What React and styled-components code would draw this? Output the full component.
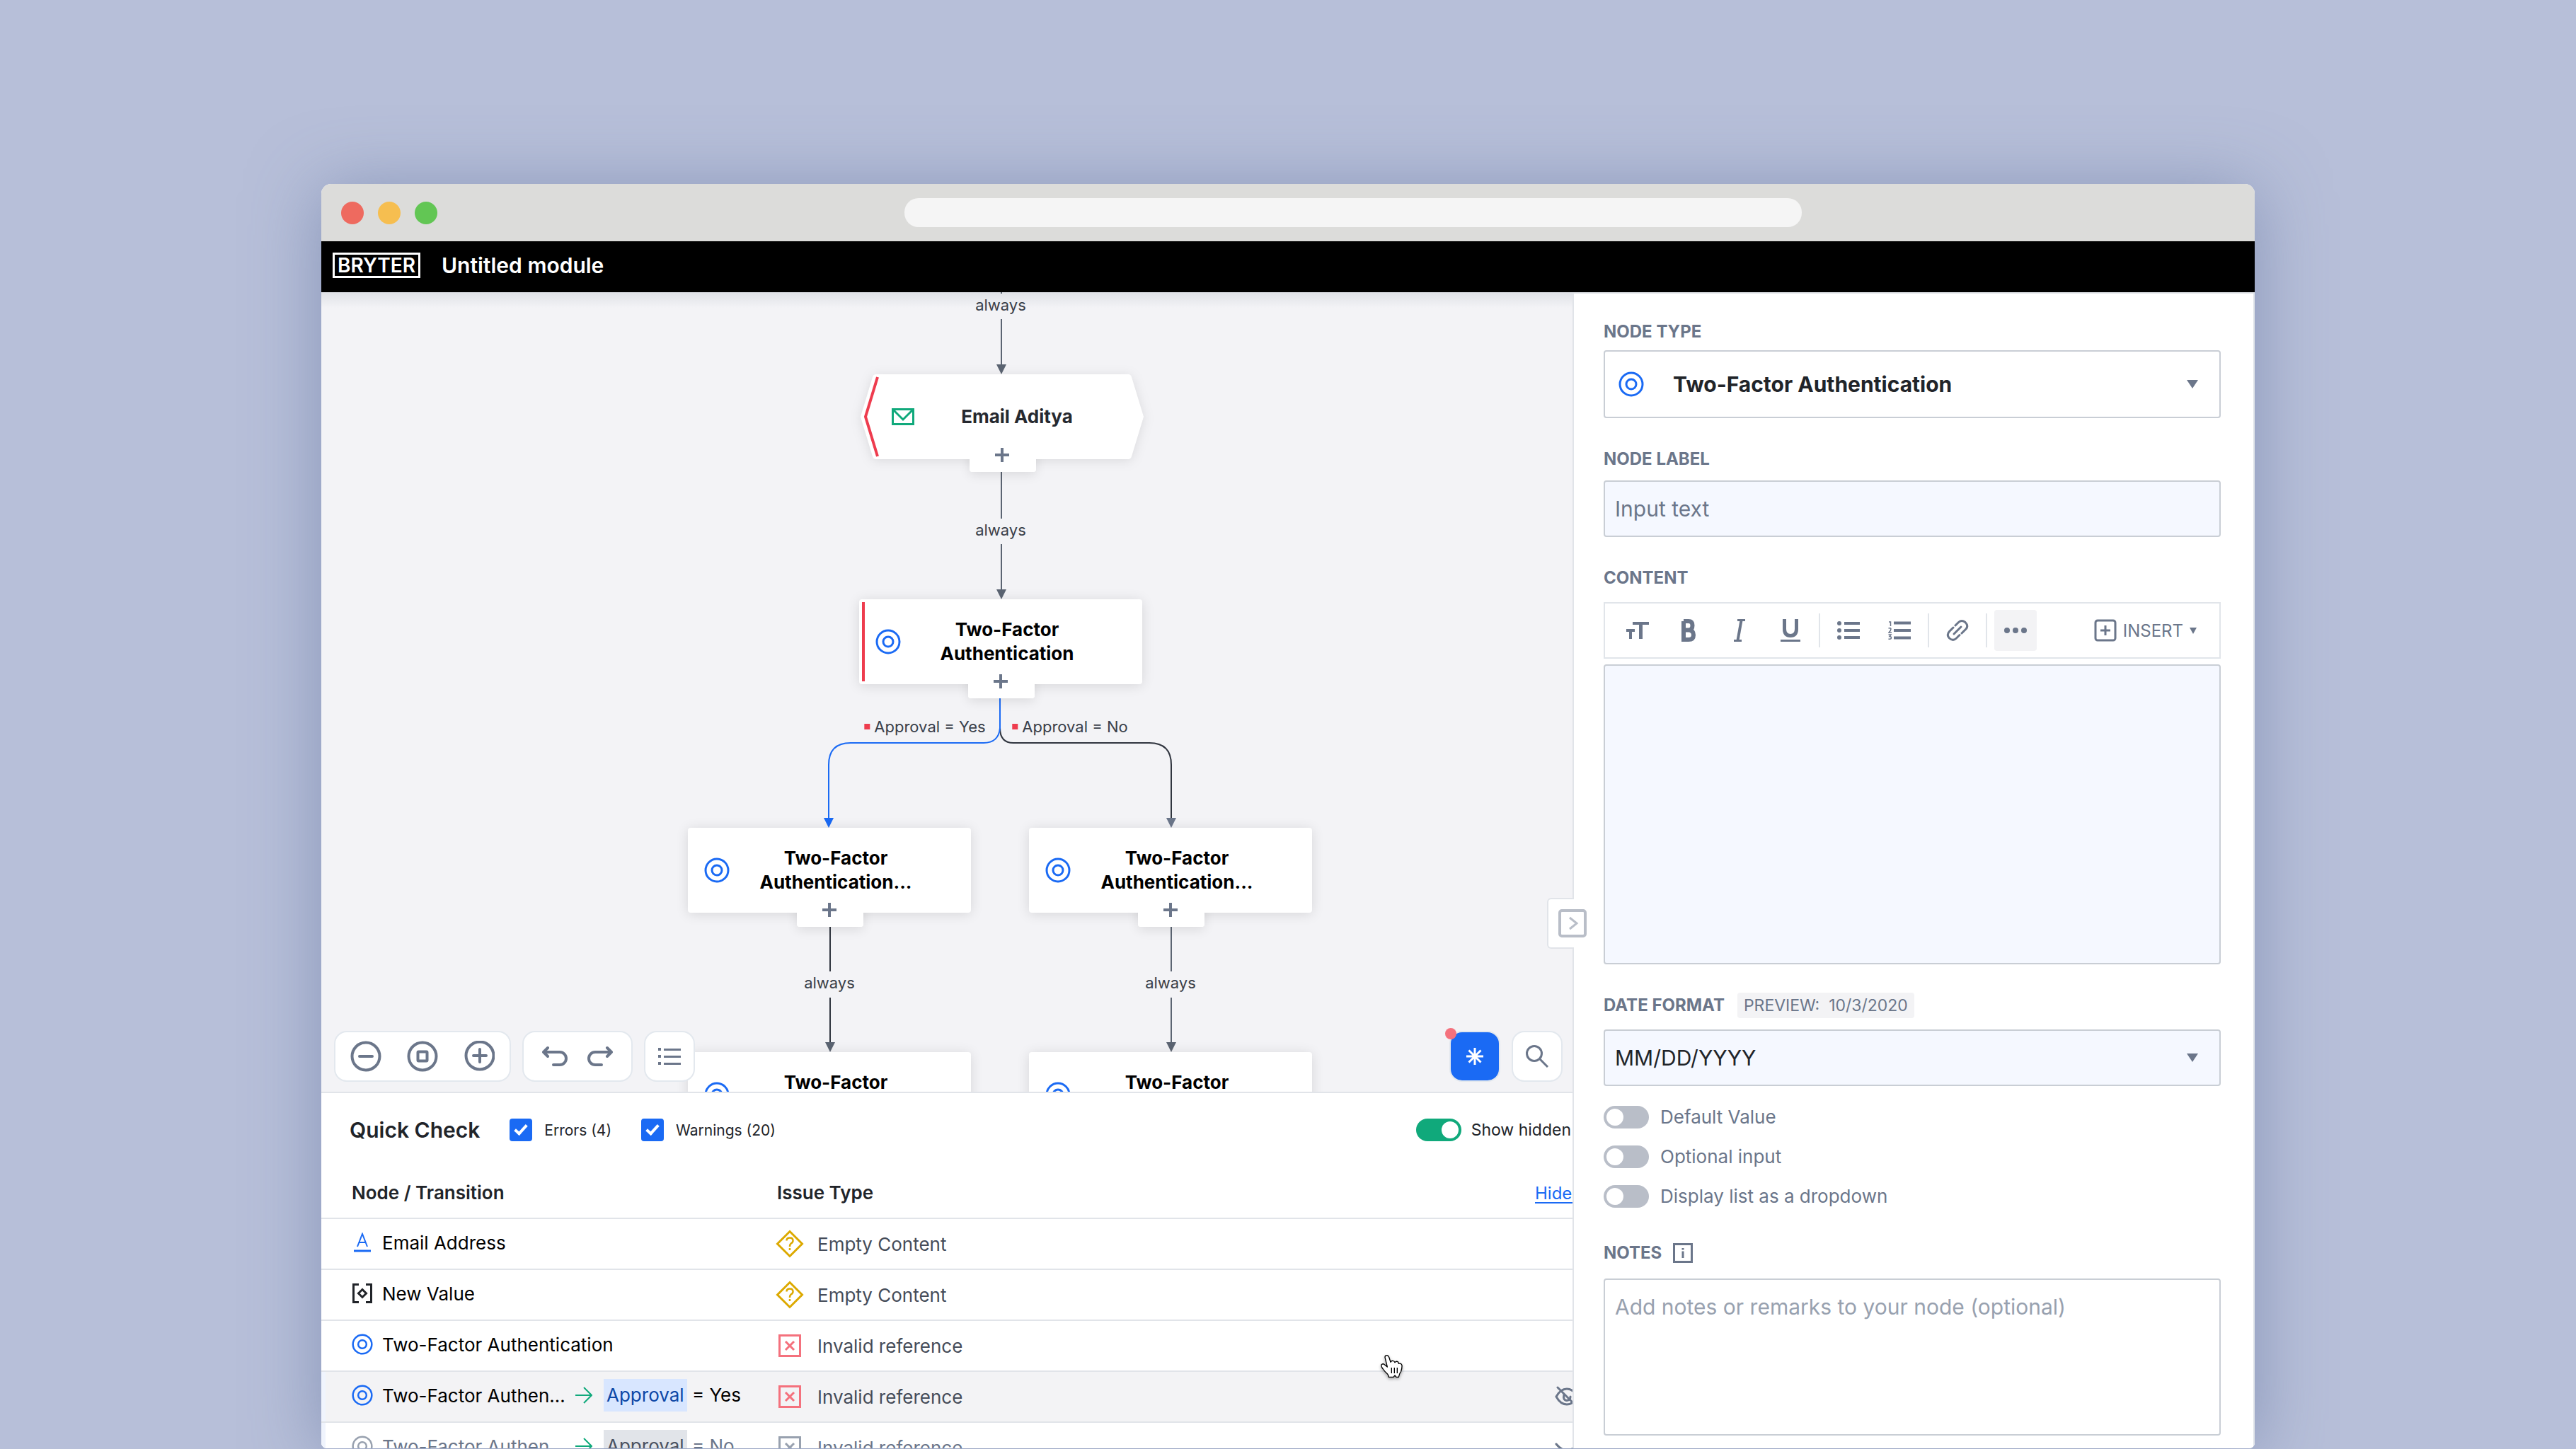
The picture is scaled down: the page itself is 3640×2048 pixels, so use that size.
import styled, { createGlobalStyle, css } from 'styled-components';

const NODES = [
  { id: 'email', type: 'email', label: 'Email Aditya', x: 762, y: 116, error: true },
  { id: 'tfa', label: 'Two-Factor Authentication', x: 760, y: 434, error: true },
  { id: 'tfa-yes', label: 'Two-Factor Authentication...', x: 518, y: 757 },
  { id: 'tfa-no', label: 'Two-Factor Authentication...', x: 1000, y: 757 },
  { id: 'tfa-yes-2', label: 'Two-Factor Authentication...', x: 518, y: 1074 },
  { id: 'tfa-no-2', label: 'Two-Factor Authentication...', x: 1000, y: 1074 },
];

const TRANSITIONS = [
  { id: 't1', text: 'always', x: 960, y: 18 },
  { id: 't2', text: 'always', x: 960, y: 336 },
  { id: 't3', text: 'Approval = Yes', x: 853, y: 614, error: true },
  { id: 't4', text: 'Approval = No', x: 1058, y: 614, error: true },
  { id: 't5', text: 'always', x: 718, y: 976 },
  { id: 't6', text: 'always', x: 1200, y: 976 },
];

const ISSUES = [
  { id: 1, icon: 'text', name: 'Email Address', issue: 'Empty Content', level: 'warning' },
  { id: 2, icon: 'value', name: 'New Value', issue: 'Empty Content', level: 'warning' },
  { id: 3, icon: 'target', name: 'Two-Factor Authentication', issue: 'Invalid reference', level: 'error' },
  { id: 4, icon: 'target', name: 'Two-Factor Authentication', value: 'Yes', issue: 'Invalid reference', level: 'error', active: true },
  { id: 5, icon: 'target', name: 'Two-Factor Authentication', value: 'No', issue: 'Invalid reference', level: 'error', hidden: true },
];

const OPTIONS = ['Default Value', 'Optional input', 'Display list as a dropdown'];

export default function App() {
  return (
    <Page>
      <GlobalStyle />
      <BrowserWindow>
        <TitleBar>
          <Lights>
            <Light $color="#ee6a5f" />
            <Light $color="#f6be50" />
            <Light $color="#62c654" />
          </Lights>
          <AddressBar aria-label="Address" />
        </TitleBar>
        <AppHeader>
          <Logo href="#">BRYTER</Logo>
          <ModuleName>Untitled module</ModuleName>
        </AppHeader>
        <Workspace>
          <Main>
            <Canvas />
            <QuickCheck />
          </Main>
          <NodePanel />
          <HandCursor />
        </Workspace>
      </BrowserWindow>
    </Page>
  );
}

const Canvas = () => (
  <CanvasArea>
    <Edges />
    {TRANSITIONS.map((t) => (
      <Transition key={t.id} $x={t.x} $y={t.y}>
        {t.error && <ErrorMark />}
        {t.text}
      </Transition>
    ))}
    {NODES.map((node) => (
      <Node key={node.id} {...node} />
    ))}
    <Tools>
      <ToolGroup $gap={36} $pad={21}>
        <ToolButton aria-label="Zoom out"><ZoomOutIcon /></ToolButton>
        <ToolButton aria-label="Fit to screen"><FitIcon /></ToolButton>
        <ToolButton aria-label="Zoom in"><ZoomInIcon /></ToolButton>
      </ToolGroup>
      <ToolGroup $gap={28} $pad={26}>
        <ToolButton aria-label="Undo"><UndoIcon /></ToolButton>
        <ToolButton aria-label="Redo"><UndoIcon flip /></ToolButton>
      </ToolGroup>
      <ToolGroup $pad={18}>
        <ToolButton aria-label="List"><ListIcon /></ToolButton>
      </ToolGroup>
      <Spacer />
      <SquareButton $primary aria-label="Quick check">
        <SparkIcon />
        <Notification />
      </SquareButton>
      <SquareButton aria-label="Search">
        <SearchIcon />
      </SquareButton>
    </Tools>
  </CanvasArea>
);

const Node = ({ type, label, x, y, error }) => {
  const isEmail = type === 'email';

  return (
    <NodeWrap $x={x} $y={y}>
      <NodeTab $email={isEmail} />
      {isEmail ? <EmailShape /> : <NodeCard>{error && <ErrorBar />}</NodeCard>}
      <NodeContent $email={isEmail}>
        {isEmail ? <MailIcon /> : <TargetIcon size={36} />}
        <NodeLabel $muted={isEmail}>{label}</NodeLabel>
      </NodeContent>
      <AddButton $email={isEmail} aria-label="Add node">
        <svg width="20" height="20" stroke="#6b768a" strokeWidth="4">
          <path d="M0 10H20M10 0V20" />
        </svg>
      </AddButton>
    </NodeWrap>
  );
};

const QuickCheck = () => (
  <Drawer>
    <DrawerHeader>
      <DrawerTitle>Quick Check</DrawerTitle>
      <CheckLabel>
        <Checkbox defaultChecked />
        Errors (4)
      </CheckLabel>
      <CheckLabel>
        <Checkbox defaultChecked />
        Warnings (20)
      </CheckLabel>
      <Spacer />
      <ToggleLabel $dark>
        <Toggle defaultChecked />
        Show hidden
      </ToggleLabel>
    </DrawerHeader>
    <IssueTable>
      <colgroup>
        <col />
        <col />
        <col />
      </colgroup>
      <thead>
        <tr>
          <th scope="col">Node / Transition</th>
          <th scope="col">Issue Type</th>
          <th scope="col"><HideLink href="#">Hide&nbsp;</HideLink></th>
        </tr>
      </thead>
      <tbody>
        {ISSUES.map((row) => (
          <IssueRow key={row.id} $active={row.active} $hidden={row.hidden}>
            <td>
              <Cell $gap={13}>
                <IconSlot $size={30}>
                  <RowIcon name={row.icon} muted={row.hidden} />
                </IconSlot>
                <RowName $short={Boolean(row.value)}>{row.name}</RowName>
                {row.value && (
                  <Condition>
                    <ArrowIcon />
                    <span>
                      <Chip $muted={row.hidden}>Approval</Chip> = {row.value}
                    </span>
                  </Condition>
                )}
              </Cell>
            </td>
            <td>
              <Cell $gap={19}>
                <IconSlot $size={40}>
                  {row.level === 'warning' ? <WarningIcon /> : <InvalidIcon muted={row.hidden} />}
                </IconSlot>
                {row.issue}
              </Cell>
            </td>
            <td>
              {(row.active || row.hidden) && (
                <RowAction aria-label={row.hidden ? 'Show issue' : 'Hide issue'}>
                  <EyeIcon closed={row.hidden} />
                </RowAction>
              )}
            </td>
          </IssueRow>
        ))}
      </tbody>
    </IssueTable>
  </Drawer>
);

const NodePanel = () => (
  <Panel>
    <CollapseTab aria-label="Collapse panel">
      <svg width="40" height="40" fill="none" stroke="#b9bec8">
        <rect x="2" y="2" width="36" height="36" rx="3" strokeWidth="4" />
        <path d="M16 12L26 20L16 28" strokeWidth="3" />
      </svg>
    </CollapseTab>

    <Label htmlFor="node-type">NODE TYPE</Label>
    <SelectBox $tall>
      <TargetIcon size={36} />
      <Select id="node-type" $withIcon>
        <option>Two-Factor Authentication</option>
      </Select>
      <Caret />
    </SelectBox>

    <Label htmlFor="node-label" $top={44} $bottom={16}>NODE LABEL</Label>
    <TextInput id="node-label" placeholder="Input text" />

    <Label htmlFor="content" $top={44} $bottom={20}>CONTENT</Label>
    <EditorToolbar>
      <EditorGroup>
        <EditorButton aria-label="Text size"><TextSizeIcon /></EditorButton>
        <EditorButton aria-label="Bold"><BoldIcon /></EditorButton>
        <EditorButton aria-label="Italic"><ItalicIcon /></EditorButton>
        <EditorButton aria-label="Underline"><UnderlineIcon /></EditorButton>
      </EditorGroup>
      <Separator />
      <EditorGroup>
        <EditorButton aria-label="Bullet list"><BulletsIcon /></EditorButton>
        <EditorButton aria-label="Numbered list"><NumbersIcon /></EditorButton>
      </EditorGroup>
      <Separator />
      <EditorGroup>
        <EditorButton aria-label="Link"><LinkIcon /></EditorButton>
      </EditorGroup>
      <Separator />
      <MoreButton aria-label="More">
        <svg width="32" height="8" fill="#6b768a">
          <circle cx="4" cy="4" r="4" />
          <circle cx="16" cy="4" r="4" />
          <circle cx="28" cy="4" r="4" />
        </svg>
      </MoreButton>
      <InsertButton>
        <svg width="32" height="32" fill="none" stroke="#6b768a" strokeWidth="3">
          <rect x="2" y="2" width="28" height="28" rx="3" />
          <path d="M9 16H23M16 9V23" />
        </svg>
        INSERT
        <svg width="10" height="9" fill="#6b768a"><path d="M0 0H10L5 9Z" /></svg>
      </InsertButton>
    </EditorToolbar>
    <Editor id="content" />

    <LabelRow>
      <Label htmlFor="date-format" $bottom={0}>DATE FORMAT</Label>
      <Preview>PREVIEW:&nbsp; 10/3/2020</Preview>
    </LabelRow>
    <SelectBox $filled>
      <Select id="date-format">
        <option>MM/DD/YYYY</option>
      </Select>
      <Caret />
    </SelectBox>

    <Options>
      {OPTIONS.map((option) => (
        <ToggleLabel key={option}>
          <Toggle />
          {option}
        </ToggleLabel>
      ))}
    </Options>

    <Label htmlFor="notes" $top={50} $bottom={22}>
      NOTES
      <svg width="28" height="28" fill="none" stroke="#6b768a">
        <rect x="1.5" y="1.5" width="25" height="25" strokeWidth="3" />
        <path d="M14 11.5V21M14 7V9.5" strokeWidth="3" />
      </svg>
    </Label>
    <Notes id="notes" placeholder="Add notes or remarks to your node (optional)" />
  </Panel>
);

/* Icons */

const TargetIcon = ({ size = 28, color = '#1a6af4' }) => (
  <svg width={size} height={size} viewBox="0 0 36 36" fill="none" stroke={color} strokeWidth="3">
    <circle cx="18" cy="18" r="16" />
    <circle cx="18" cy="18" r="7" />
  </svg>
);

const MailIcon = () => (
  <svg width="32" height="24" fill="none" stroke="#10a97b" strokeWidth="3">
    <rect x="1.5" y="1.5" width="29" height="21" />
    <path d="M3 3L16 16L29 3" />
  </svg>
);

const EmailShape = () => (
  <ShapeSvg width="400" height="120">
    <path
      d="M17 4Q18 0 22 0H378Q382 0 383 4L400 60L383 116Q382 120 378 120H22Q18 120 17 116L0 60Z"
      fill="#fff"
    />
    <path d="M24 4L7 60L24 116" fill="none" stroke="#ee3c4e" strokeWidth="4" />
  </ShapeSvg>
);

const Edges = () => (
  <EdgeSvg fill="none" stroke="#5b6472" strokeWidth="2">
    <path d="M961 0V2M961 38V104M961 252V320M961 356V422M1201 896V960M1201 997V1062" />
    <path d="M959 574V616Q959 637 978 637H1170Q1201 637 1201 668V748" stroke="#30353f" />
    <path d="M719 896V960M719 997V1062" stroke="#30353f" />
    <path d="M959 574V616Q957 637 936 637H748Q717 637 717 668V748" stroke="#1a6af4" />
    <g stroke="none" fill="#5b6472">
      <path d="M954 102H968L961 116Z" />
      <path d="M954 420H968L961 434Z" />
      <path d="M712 1060H726L719 1074Z" />
      <path d="M1194 1060H1208L1201 1074Z" />
      <path d="M1194 743H1208L1201 757Z" fill="#6b768a" />
      <path d="M710 743H724L717 757Z" fill="#1a6af4" />
    </g>
  </EdgeSvg>
);

const ZoomOutIcon = () => (
  <svg width="44" height="44" fill="none" stroke="#6b768a" strokeWidth="4" strokeLinecap="round">
    <circle cx="22" cy="22" r="19.5" />
    <path d="M13 22H31" />
  </svg>
);

const ZoomInIcon = () => (
  <svg width="44" height="44" fill="none" stroke="#6b768a" strokeWidth="4" strokeLinecap="round">
    <circle cx="23" cy="21" r="19.5" />
    <path d="M14 21H32M23 12V30" />
  </svg>
);

const FitIcon = () => (
  <svg width="44" height="44" fill="none" stroke="#6b768a" strokeWidth="4">
    <circle cx="22" cy="22" r="19.5" />
    <rect x="15.5" y="15.5" width="13" height="13" rx="1" />
  </svg>
);

const UndoIcon = ({ flip }) => (
  <svg width="36" height="30" fill="none" stroke="#6b768a" strokeWidth="4" strokeLinecap="round" strokeLinejoin="round">
    <path
      d="M8 3L2 9L8 15M3 9H25A9 9 0 0 1 25 27H16"
      transform={flip ? 'matrix(-1 0 0 1 36 0)' : undefined}
    />
  </svg>
);

const ListIcon = () => (
  <svg width="32" height="26" fill="#6b768a">
    <path d="M0 1H4V5H0ZM8 2H32V5H8ZM0 11H4V15H0ZM8 12H32V15H8ZM0 21H4V25H0ZM8 22H32V25H8Z" />
  </svg>
);

const SparkIcon = () => (
  <svg width="24" height="24" fill="none" stroke="#fff" strokeWidth="3">
    <path d="M12 0V24M0 12H24M3.5 3.5L20.5 20.5M20.5 3.5L3.5 20.5" />
  </svg>
);

const SearchIcon = () => (
  <svg width="32" height="32" fill="none" stroke="#6b768a" strokeWidth="3">
    <circle cx="12" cy="12" r="10.5" />
    <path d="M19.5 19.5L31 31" />
  </svg>
);

const RowIcon = ({ name, muted }) => {
  if (name === 'text') {
    return (
      <svg width="24" height="28" fill="none" stroke="#1a6af4" strokeWidth="2">
        <path d="M5 20L12 2L19 20M7.5 14H16.5" />
        <path d="M0 26H24" strokeWidth="3" />
      </svg>
    );
  }
  if (name === 'value') {
    return (
      <svg width="30" height="28" fill="none" stroke="#212429" strokeWidth="3">
        <path d="M10 1.5H2.5V26.5H10M20 1.5H27.5V26.5H20" />
        <path d="M15 8.5L20.5 14L15 19.5L9.5 14Z" />
      </svg>
    );
  }
  return <TargetIcon size={30} color={muted ? '#98a1af' : '#1a6af4'} />;
};

const WarningIcon = () => (
  <svg width="40" height="40" fill="none" stroke="#dca900" strokeWidth="3">
    <path d="M20 2.5L37.5 20L20 37.5L2.5 20Z" />
    <path d="M15.5 15.5Q15.5 11.5 20 11.5Q24.5 11.5 24.5 15.5Q24.5 18 22 19.3Q20 20.5 20 24M20 26V29" strokeWidth="2.5" />
  </svg>
);

const InvalidIcon = ({ muted }) => (
  <svg width="32" height="32" fill="none" stroke={muted ? '#98a1af' : '#f4717d'} strokeWidth="3">
    <rect x="1.5" y="1.5" width="29" height="29" />
    <path d="M10 10L22 22M22 10L10 22" />
  </svg>
);

const ArrowIcon = () => (
  <svg width="24" height="24" fill="none" stroke="#10a97b" strokeWidth="2">
    <path d="M0 12H23M12 1L23 12L12 23" />
  </svg>
);

const EyeIcon = ({ closed }) => (
  <svg width="34" height="30" fill="none" stroke="#6b768a" strokeWidth="3" strokeLinecap="round">
    {closed ? (
      <path d="M2 10Q17 28 32 10M9 17L5 22M17 20V26M25 17L29 22" />
    ) : (
      <>
        <path d="M2 15Q8 4 17 4Q26 4 32 15Q26 26 17 26Q8 26 2 15Z" />
        <path d="M13 12Q11 20 17 20.5Q22 20 22 15" />
        <path d="M4 2L29 27" />
      </>
    )}
  </svg>
);

const TextSizeIcon = () => (
  <svg width="32" height="24" fill="#6b768a">
    <path d="M9 0H32V4H23V24H18V4H9ZM0 10H12V14H8V24H4V14H0Z" />
  </svg>
);

const BoldIcon = () => (
  <svg width="20" height="32" fill="none" stroke="#6b768a" strokeWidth="6">
    <path d="M3 3H10Q15.5 3 15.5 9Q15.5 15.5 10 15.5H3M10 15.5Q17 16 17 22.5Q17 29 10 29H3V3" />
  </svg>
);

const ItalicIcon = () => (
  <svg width="16" height="32" fill="none" stroke="#6b768a" strokeWidth="3">
    <path d="M5 1.5H16M0 30.5H11" />
    <path d="M10.5 2L5.5 30" strokeWidth="4" />
  </svg>
);

const UnderlineIcon = () => (
  <svg width="28" height="32" fill="none" stroke="#6b768a">
    <path d="M5.5 0V14Q5.5 23.5 14 23.5Q22.5 23.5 22.5 14V0" strokeWidth="5" />
    <path d="M0 30.5H28" strokeWidth="3" />
  </svg>
);

const BulletsIcon = () => (
  <svg width="32" height="26" fill="#6b768a">
    <circle cx="3" cy="3" r="3" />
    <circle cx="3" cy="13" r="3" />
    <circle cx="3" cy="23" r="3" />
    <path d="M10 1H32V5H10ZM10 11H32V15H10ZM10 21H32V25H10Z" />
  </svg>
);

const NumbersIcon = () => (
  <svg width="32" height="26" fill="none" stroke="#6b768a">
    <path d="M8 2.5H32M8 13H32M8 23.5H32" strokeWidth="4" />
    <path
      d="M1 1H3.5V7M0.5 10Q4 9 4 11Q4 13 1 16H5M0.5 19H4L2 21.5Q4.5 21.5 4.5 23.5Q4 26 0.5 25"
      strokeWidth="1.5"
    />
  </svg>
);

const LinkIcon = () => (
  <svg width="32" height="32" viewBox="0 0 32 32" fill="none" stroke="#6b768a" strokeWidth="3" strokeLinecap="round">
    <path d="M13 9L17.5 4.5Q22 0.5 27 4.5Q32 9.5 28 14L22 20" />
    <path d="M10 12L4.5 17.5Q0 22.5 4.5 27Q9.5 31.5 14 27.5L19 22.5" />
    <path d="M11 21L21 11" />
  </svg>
);

const Caret = () => (
  <CaretSvg width="16" height="12" fill="#6b768a">
    <path d="M0 0H16L8 12Z" />
  </CaretSvg>
);

const HandCursor = () => (
  <CursorSvg width="34" height="38" viewBox="29 38 102 114">
    <path
      d="M50 54Q50 46 58 46Q65 46 68 56L74 75Q76 68 84 69Q90 70 92 76Q98 69 106 74Q108 77 108 81Q119 78 122 88Q123 100 118 114Q111 122 108 138H98L92 131L86 138H66Q65 130 60 124Q50 116 42 104Q33 94 35 86Q41 79 48 85L60 95Z"
      fill="#fff"
      stroke="#000"
      strokeWidth="4"
      strokeLinejoin="round"
    />
    <path d="M78 98V122M90 98V122M102 98V122" stroke="#000" strokeWidth="4" />
  </CursorSvg>
);

/* Styles */

const GlobalStyle = createGlobalStyle`
  *, *::before, *::after {
    box-sizing: border-box;
  }

  body {
    margin: 0;
    font-family: Inter, 'Liberation Sans', sans-serif;
    color: #212429;
  }

  button, input, select, textarea {
    margin: 0;
    font: inherit;
    color: inherit;
  }

  button {
    padding: 0;
    border: 0;
    background: none;
  }

  svg {
    display: block;
    flex-shrink: 0;
  }
`;

const Page = styled.div`
  display: flex;
  flex-direction: column;
  height: 100vh;
  padding: 260px 454px 1px;
  overflow: hidden;
  background: #b7bfd9;
`;

const BrowserWindow = styled.div`
  display: flex;
  flex: 1;
  flex-direction: column;
  min-height: 0;
  border-radius: 14px 14px 8px 8px;
  overflow: hidden;
  background: #fff;
  box-shadow: 0 8px 100px rgba(88, 108, 152, 0.5);
`;

const TitleBar = styled.div`
  display: grid;
  grid-template-columns: 13fr 1268px 10fr;
  align-items: center;
  height: 81px;
  padding: 0 28px;
  background: #dcdcda;
`;

const Lights = styled.div`
  display: flex;
  gap: 20px;
`;

const Light = styled.span`
  width: 32px;
  height: 32px;
  border-radius: 50%;
  background: ${({ $color }) => $color};
`;

const AddressBar = styled.input`
  height: 41px;
  border: 0;
  border-radius: 20px;
  background: #f5f5f5;
`;

const AppHeader = styled.header`
  display: flex;
  align-items: center;
  gap: 30px;
  height: 72px;
  padding: 0 16px 4px;
  background: #000;
  color: #fff;
`;

const Logo = styled.a`
  padding: 0 4px;
  border: 3px solid #fff;
  font-size: 28px;
  font-weight: 600;
  line-height: 30px;
  color: #fff;
  text-decoration: none;
`;

const ModuleName = styled.h1`
  margin: 0;
  font-size: 30px;
  font-weight: 600;
  line-height: 36px;
`;

const Workspace = styled.div`
  position: relative;
  display: flex;
  flex: 1;
  min-height: 0;
`;

const Main = styled.main`
  display: flex;
  flex: 1;
  flex-direction: column;
  min-width: 0;
`;

const CanvasArea = styled.section`
  position: relative;
  flex: 1;
  overflow: hidden;
  background: linear-gradient(#dfe1e6, #f3f3f6 22px);
`;

const EdgeSvg = styled.svg`
  position: absolute;
  inset: 0;
  width: 100%;
  height: 100%;
`;

const Transition = styled.span`
  position: absolute;
  left: ${({ $x }) => $x}px;
  top: ${({ $y }) => $y}px;
  display: flex;
  align-items: center;
  gap: 6px;
  font-size: 22px;
  line-height: 28px;
  color: #3a3f4a;
  white-space: nowrap;
  transform: translate(-50%, -50%);
`;

const ErrorMark = styled.i`
  width: 8px;
  height: 8px;
  background: #ee3c4e;
`;

const NodeWrap = styled.article`
  position: absolute;
  left: ${({ $x }) => $x}px;
  top: ${({ $y }) => $y}px;
  width: 400px;
  height: 120px;
`;

const NodeTab = styled.span`
  position: absolute;
  left: 154px;
  top: 100px;
  width: 94px;
  height: ${({ $email }) => ($email ? 38 : 40)}px;
  border-radius: 4px;
  background: #fff;
  box-shadow: 0 4px 16px rgba(0, 0, 0, 0.1);
`;

const NodeCard = styled.div`
  position: absolute;
  inset: 0;
  padding: 4px;
  border-radius: 4px;
  background: #fff;
  box-shadow: 0 2px 18px rgba(0, 0, 0, 0.12);
`;

const ErrorBar = styled.div`
  width: 4px;
  height: 100%;
  background: #ee3c4e;
`;

const ShapeSvg = styled.svg`
  position: absolute;
  inset: 0;
  overflow: visible;
  filter: drop-shadow(0 2px 8px rgba(0, 0, 0, 0.1));
`;

const NodeContent = styled.div`
  position: relative;
  display: flex;
  align-items: center;
  height: 100%;
  padding: ${({ $email }) => ($email ? '0 34px 0 44px' : '0 41px 0 23px')};
`;

const NodeLabel = styled.strong`
  flex: 1;
  padding: 0 40px;
  font-size: 26px;
  font-weight: 700;
  line-height: 34px;
  text-align: center;
  color: ${({ $muted }) => ($muted ? '#26292f' : '#000')};
`;

const AddButton = styled.button`
  position: absolute;
  left: 154px;
  top: ${({ $email }) => ($email ? 99 : 101)}px;
  display: grid;
  place-items: center;
  width: 94px;
  height: 39px;
  padding: 0 2px 9px 0;
  border-radius: 0 0 4px 4px;
  background: #fff;
`;

const Tools = styled.div`
  position: absolute;
  left: 18px;
  right: 14px;
  bottom: 14px;
  display: flex;
  gap: 16px;
`;

const ToolGroup = styled.div`
  display: flex;
  align-items: center;
  gap: ${({ $gap = 0 }) => $gap}px;
  height: 72px;
  padding: 0 ${({ $pad }) => $pad}px;
  border: 2px solid #e3e8ee;
  border-radius: 18px;
  background: #fff;
`;

const ToolButton = styled.button`
  display: grid;
  place-items: center;
`;

const SquareButton = styled.button`
  position: relative;
  display: grid;
  place-items: center;
  width: 72px;
  height: 72px;
  border: 2px solid #e3e8ee;
  border-radius: 18px;
  background: ${({ $primary }) => ($primary ? '#1a6af4' : '#fff')};
`;

const Notification = styled.i`
  position: absolute;
  left: -8px;
  top: -6px;
  width: 16px;
  height: 16px;
  border-radius: 50%;
  background: #f4717d;
`;

const Spacer = styled.span`
  flex: 1;
`;

const Drawer = styled.section`
  flex: 0 0 504px;
  overflow: hidden;
  border-top: 2px solid #e1e4e9;
  background: #fff;
`;

const DrawerHeader = styled.div`
  display: flex;
  align-items: center;
  gap: 42px;
  height: 104px;
  padding: 0 2px 0 40px;
`;

const DrawerTitle = styled.h2`
  margin: 0;
  font-size: 30px;
  font-weight: 600;
`;

const CheckLabel = styled.label`
  display: flex;
  align-items: center;
  gap: 17px;
  font-size: 21px;
`;

const Checkbox = styled.input.attrs({ type: 'checkbox' })`
  appearance: none;
  display: grid;
  place-items: center;
  width: 32px;
  height: 32px;
  border: 2px solid #1a6af4;
  border-radius: 4px;

  &:checked {
    background: #1a6af4;
  }

  &:checked::before {
    content: '';
    width: 10px;
    height: 18px;
    margin-top: -5px;
    border: solid #fff;
    border-width: 0 4px 4px 0;
    transform: rotate(42deg);
  }
`;

const Toggle = styled.input.attrs({ type: 'checkbox', role: 'switch' })`
  appearance: none;
  display: flex;
  width: 64px;
  height: 32px;
  padding: 4px;
  border-radius: 16px;
  background: #b9bec8;

  &::before {
    content: '';
    width: 24px;
    height: 24px;
    border-radius: 50%;
    background: #fff;
  }

  &:checked {
    justify-content: flex-end;
    background: #10a97b;
  }
`;

const ToggleLabel = styled.label`
  display: flex;
  align-items: center;
  gap: ${({ $dark }) => ($dark ? 14 : 16)}px;
  font-size: ${({ $dark }) => ($dark ? 23 : 26)}px;
  line-height: 32px;
  color: ${({ $dark }) => ($dark ? '#212429' : '#6b768a')};
`;

const IssueTable = styled.table`
  width: calc(100% + 70px);
  border-spacing: 0;
  table-layout: fixed;
  font-size: 26px;

  col:first-child {
    width: 642px;
  }

  col:last-child {
    width: 123px;
  }

  th,
  td {
    height: 72px;
    padding: 0;
    border-bottom: 2px solid #e1e4e9;
    text-align: left;
  }

  th {
    height: 74px;
    padding-left: 2px;
    font-weight: 600;
  }

  th:last-child {
    padding-left: 0;
  }

  th:first-child,
  td:first-child {
    padding-left: 43px;
  }

  td:first-child {
    padding-bottom: 4px;
  }
`;

const HideLink = styled.a`
  font-size: 24px;
  font-weight: 400;
  color: #1a6af4;
  text-underline-offset: 4px;
`;

const IssueRow = styled.tr`
  color: #000;

  td:nth-child(2) {
    color: #454c59;
  }

  ${({ $active }) =>
    $active &&
    css`
      background: #f3f3f5;
    `}

  ${({ $hidden }) =>
    $hidden &&
    css`
      &,
      td:nth-child(2) {
        color: #6b768a;
      }
    `}

  ${({ $active, $hidden }) =>
    ($active || $hidden) &&
    css`
      td:first-child {
        box-shadow: inset 6px 0 #f0f4fd;
      }
    `}
`;

const Cell = styled.div`
  display: flex;
  align-items: center;
  gap: ${({ $gap }) => $gap}px;
`;

const IconSlot = styled.span`
  display: grid;
  place-items: center;
  width: ${({ $size }) => $size}px;
`;

const RowName = styled.span`
  overflow: hidden;
  white-space: nowrap;
  text-overflow: ellipsis;
  ${({ $short }) => $short && 'width: 260px;'}
`;

const Condition = styled.span`
  display: flex;
  align-items: center;
  gap: 16px;
  white-space: nowrap;
`;

const Chip = styled.mark`
  display: inline-block;
  padding: 0 4px;
  line-height: 46px;
  background: ${({ $muted }) => ($muted ? '#e1e4e9' : '#d8e6ff')};
  color: ${({ $muted }) => ($muted ? '#4a5160' : '#0c47a6')};
`;

const RowAction = styled.button`
  display: block;
  margin-left: 28px;
`;

const Panel = styled.aside`
  position: relative;
  flex: 0 0 964px;
  padding: 40px 46px 16px 42px;
  border: solid #e1e4e9;
  border-width: 2px 2px 0;
  background: #fff;
`;

const CollapseTab = styled.button`
  position: absolute;
  left: -38px;
  top: 854px;
  display: flex;
  align-items: center;
  width: 38px;
  height: 72px;
  padding-left: 14px;
  border: 2px solid #e1e4e9;
  border-right: 0;
  border-radius: 6px 0 0 6px;
  background: #fff;
`;

const Label = styled.label`
  display: flex;
  align-items: center;
  gap: 16px;
  margin-top: ${({ $top = 0 }) => $top}px;
  margin-bottom: ${({ $bottom = 12 }) => $bottom}px;
  font-size: 24px;
  font-weight: 700;
  line-height: 28px;
  color: #6b768a;
`;

const field = css`
  display: block;
  width: 100%;
  border: 2px solid #c9ced5;
  border-radius: 4px;
  font-size: 30px;
`;

const SelectBox = styled.div`
  ${field}
  display: grid;
  align-items: center;
  height: ${({ $tall }) => ($tall ? 96 : 80)}px;
  background: ${({ $filled }) => ($filled ? '#f5f8ff' : '#fff')};

  > * {
    grid-area: 1 / 1;
  }

  > svg {
    margin-left: 19px;
    pointer-events: none;
  }
`;

const Select = styled.select`
  appearance: none;
  width: 100%;
  height: 100%;
  padding: 0 60px 0 ${({ $withIcon }) => ($withIcon ? 96 : 14)}px;
  border: 0;
  background: none;
  font-weight: ${({ $withIcon }) => ($withIcon ? 700 : 400)};
`;

const CaretSvg = styled.svg`
  justify-self: end;
  margin-right: 30px;
`;

const TextInput = styled.input`
  ${field}
  height: 80px;
  padding: 0 14px;
  background: #f5f8ff;

  &::placeholder {
    color: #6b768a;
  }
`;

const EditorToolbar = styled.div`
  display: flex;
  align-items: center;
  height: 80px;
  padding: 0 32px 0 6px;
  border: 2px solid #e1e5ea;
`;

const EditorGroup = styled.div`
  display: flex;
  gap: 40px;
  padding: 0 24px;
`;

const EditorButton = styled.button`
  display: grid;
  place-items: center;
  width: 32px;
  height: 32px;
`;

const Separator = styled.span`
  width: 2px;
  height: 48px;
  background: #e1e5ea;
`;

const MoreButton = styled.button`
  display: grid;
  place-items: center;
  width: 60px;
  height: 58px;
  margin-left: 10px;
  border-radius: 4px;
  background: #f3f3f5;
`;

const InsertButton = styled.button`
  display: flex;
  align-items: center;
  gap: 9px;
  margin-left: auto;
  font-size: 24px;
  color: #6b768a;
`;

const Editor = styled.textarea`
  ${field}
  height: 424px;
  margin-top: 8px;
  padding: 14px;
  background: #f5f8ff;
  resize: none;
`;

const LabelRow = styled.div`
  display: flex;
  align-items: center;
  gap: 18px;
  margin: 40px 0 16px;
`;

const Preview = styled.span`
  padding: 0 9px;
  border-radius: 4px;
  background: #f3f3f5;
  font-size: 23px;
  line-height: 36px;
  color: #6b768a;
`;

const Options = styled.div`
  display: flex;
  flex-direction: column;
  align-items: flex-start;
  gap: 24px;
  margin-top: 28px;
`;

const Notes = styled.textarea`
  ${field}
  height: 222px;
  padding: 18px 14px;
  line-height: 40px;
  resize: none;

  &::placeholder {
    color: #98a1af;
  }
`;

const CursorSvg = styled.svg`
  position: absolute;
  left: 1496px;
  top: 1500px;
  overflow: visible;
  filter: drop-shadow(0 2px 2px rgba(0, 0, 0, 0.35));
  pointer-events: none;
`;
